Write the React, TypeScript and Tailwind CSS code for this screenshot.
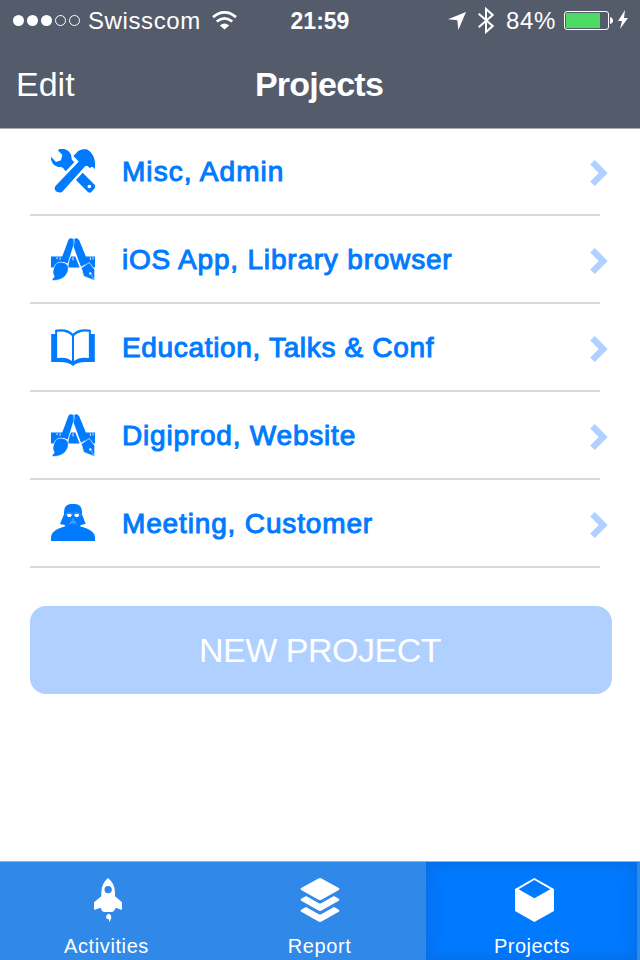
import React from 'react';

function ToolsIcon() {
  return (
    <svg viewBox="33 27 132 132" className="h-11 w-11" fill="#007aff">
      <path d="M58 27C77 24 91 34 94 48C95 54 94 58 97 61L103 67L77 94L70 85C67 81 63 81 58 81C41 79 32 66 33 50L48 66L63 61L67 45L54 31Z" />
      <path d="M100 48L109 39C116 29 127 26 140 28C153 34 164 50 165 68V87L157 80L149 84L143 78L136 78L69 153C57 165 36 151 47 137L116 65L110 58Z" />
      <path fillRule="evenodd" d="M108 120L128 98L164 134Q168 140 163 146L154 156Q149 161 143 155ZM148 134A5.5 5.5 0 1 0 148 145A5.5 5.5 0 1 0 148 134Z" />
    </svg>
  );
}

function DesignIcon() {
  return (
    <svg viewBox="33 30 132 128" className="h-[43px] w-11" fill="#007aff">
      <path d="M33 85H76L69 103L58 108L45 118H33Z" />
      <path d="M93 85H106L119 118H84L88 98Z" />
      <path d="M126 85H165V118H160L149 109L137 113Z" />
      <path d="M51 87V93M60 87V95M99 87V97M151 87V96M159 87V94" stroke="white" strokeWidth="2.5" />
      <path d="M86 33Q93 27 101 33L103 42L83 106L62 98Z" />
      <path d="M103 32Q112 27 118 37L145 103L123 116L101 56Z" />
      <path d="M102 34V48" stroke="white" strokeWidth="2" />
      <path d="M60 102Q77 101 84 112C90 137 68 159 38 157Q33 154 41 149C46 145 37 139 39 128Q43 104 60 102Z" stroke="white" strokeWidth="2" />
      <path d="M124 119L148 103L164 124V157L131 144Z" stroke="white" strokeWidth="2" />
      <circle cx="151" cy="136" r="3.5" fill="white" />
      <path d="M152 137L162 154" stroke="white" strokeWidth="1.5" />
    </svg>
  );
}

function BookIcon() {
  return (
    <svg viewBox="33 38 132 112" className="h-[37px] w-11" fill="#007aff">
      <path d="M33 53H45V40Q81 34 99 52Q117 34 153 40V53H165V138H139Q110 138 99 150Q87 138 59 138H33Z" />
      <path fill="white" d="M51 46Q80 42 96 59V135Q79 121 51 126ZM147 46Q118 42 102 59V135Q119 121 147 126Z" />
    </svg>
  );
}

function VaderIcon() {
  return (
    <svg viewBox="33 36 132 111" className="-mt-0.5 h-[37px] w-11" fill="#007aff">
      <path d="M33 147V134Q35 119 58 109L76 103L74 99L60 96L72 67C72 46 76 36 99 36C122 36 126 46 126 67L137 96L122 99L120 103L139 109Q163 119 165 134V147Z" />
      <path fill="white" d="M81 67Q91 63 96 70Q94 76 86 76L81 72ZM117 67Q107 63 102 70Q104 76 112 76L117 72Z" />
      <path d="M88 97L95 87H103L110 97M95 96L98 89M103 96L100 89M96 81H102" fill="none" stroke="#b5d6ff" strokeWidth="1.6" />
      <path d="M74 71L80 64Q91 59 99 66Q108 59 118 64L124 71" fill="none" stroke="#8fc3ff" strokeWidth="1.3" />
    </svg>
  );
}

function Chevron() {
  return (
    <svg viewBox="0 0 18 26" className="mt-[3px] h-[26px] w-[18px]">
      <path d="M2.5 2.2L13.2 13L2.5 23.8" fill="none" stroke="#b0d1ff" strokeWidth="6.4" />
    </svg>
  );
}

function Wifi() {
  return (
    <svg viewBox="637 32 74 56" className="h-[19px] w-[25px]" fill="none" stroke="white" strokeWidth="8">
      <path d="M640 50Q674 22 708 50M651 63Q674 44 697 63" />
      <path d="M660 75Q674 63 688 75L674 87Z" fill="white" stroke="none" />
    </svg>
  );
}

const projects = [
  { name: 'Misc, Admin', icon: <ToolsIcon />, tracking: 'tracking-[1.05px]' },
  { name: 'iOS App, Library browser', icon: <DesignIcon />, tracking: 'tracking-[0.8px]' },
  { name: 'Education, Talks & Conf', icon: <BookIcon />, tracking: 'tracking-[0.67px]' },
  { name: 'Digiprod, Website', icon: <DesignIcon />, tracking: 'tracking-[0.8px]' },
  { name: 'Meeting, Customer', icon: <VaderIcon />, tracking: 'tracking-[0.85px]' },
];

function StatusBar() {
  return (
    <div className="grid h-10 grid-cols-[290px_60px_290px] text-[24px] leading-9">
      <div className="flex h-10 items-center pl-[13px]">
        <svg viewBox="0 0 68 12" className="h-3 w-[68px]" fill="white">
          <circle cx="5.5" cy="6.5" r="5.5" />
          <circle cx="19.5" cy="6.5" r="5.5" />
          <circle cx="33.5" cy="6.5" r="5.5" />
          <circle cx="47.5" cy="6.5" r="5" fill="none" stroke="white" />
          <circle cx="61.5" cy="6.5" r="5" fill="none" stroke="white" />
        </svg>
        <span className="ml-[7px] w-[124px] whitespace-nowrap pt-0.5 tracking-[0.6px]">Swisscom</span>
        <Wifi />
      </div>
      <div className="whitespace-nowrap pt-[3px] text-center text-[23px] font-bold">21:59</div>
      <div className="flex h-10 items-center pl-[98px]">
        <svg viewBox="385 36 54 54" className="mt-0.5 h-[18px] w-[18px]" fill="white">
          <path d="M439 36L416 90L413 61L385 58Z" />
        </svg>
        <svg viewBox="474 21 48 81" className="ml-[12px] h-[27px] w-4" fill="none" stroke="white" strokeWidth="6">
          <path d="M476 41L518 78L498 96V27L518 45L476 82" />
        </svg>
        <span className="ml-[12px] w-[58px] whitespace-nowrap pt-0.5 tracking-[0.6px]">84%</span>
        <svg viewBox="0 0 65 20" className="h-5 w-[65px]">
          <rect x="0.5" y="1.5" width="44" height="18" rx="2.5" fill="none" stroke="white" />
          <rect x="2" y="3" width="34" height="15" fill="#4cd964" />
          <path d="M46 7Q49 8 49 10.5Q49 13 46 14Z" fill="white" />
          <path d="M61 0L54 11H58L56 19L64 8H60Z" fill="white" />
        </svg>
      </div>
    </div>
  );
}

function RocketIcon() {
  return (
    <svg viewBox="282 84 84 132" className="ml-[3px] h-11 w-7" fill="white">
      <path fillRule="evenodd" d="M324 84Q345 101 345 127V139L366 157V180L347 173Q343 185 335 186H313Q305 185 302 173L282 180V157L304 139V127Q304 101 324 84ZM324 108A11 11 0 1 0 325 130A11 11 0 1 0 324 108Z" />
      <path d="M326 191Q334 193 334 203Q333 210 327 216V208Q319 209 318 201Q318 193 326 191Z" />
    </svg>
  );
}

function LayersIcon() {
  return (
    <svg viewBox="0 0 40 44" className="h-11 w-10" fill="white">
      <path d="M18.5 0.5Q20 -0.5 21.5 0.5L38.8 10Q40 11 38.8 12L21.5 21.7Q20 22.5 18.5 21.7L1.2 12Q0 11 1.2 10Z" />
      <path d="M1.2 20.8L6 18L18.5 25Q20 26 21.5 25L34 18L38.8 20.8Q40 21.8 38.8 22.7L21.5 32.5Q20 33.4 18.5 32.5L1.2 22.7Q0 21.8 1.2 20.8Z" />
      <path d="M1.2 31.8L6 29L18.5 36Q20 37 21.5 36L34 29L38.8 31.8Q40 32.8 38.8 33.7L21.5 43.5Q20 44.4 18.5 43.5L1.2 33.7Q0 32.8 1.2 31.8Z" />
    </svg>
  );
}

function CubeIcon() {
  return (
    <svg viewBox="585 84 117 132" className="ml-1.5 h-11 w-[39px]" fill="white">
      <path fillRule="evenodd" d="M643 84L702 117V183L643 216L585 183V117ZM643 90L596 118L643 145L691 118Z" />
    </svg>
  );
}

export default function App() {
  return (
    <div className="flex h-[960px] w-[640px] flex-col overflow-hidden bg-white font-['Liberation_Sans',Arial,sans-serif] text-white">
      <header className="h-[129px] border-b border-[#aaa9ab] bg-[#545b6b]">
        <StatusBar />
        <div className="grid h-[88px] grid-cols-3 text-[34px] leading-[88px]">
          <span className="pl-4">Edit</span>
          <h1 className="-ml-0.5 text-center font-bold tracking-[-0.75px]">Projects</h1>
        </div>
      </header>
      <main className="-mt-px flex-1">
        <ul>
          {projects.map((p) => (
            <li key={p.name} className="mr-10 ml-[30px] flex h-[88px] items-center border-b-2 border-[#dadadb]">
              <span className="ml-[21px] w-[71px]">{p.icon}</span>
              <span className={`w-[468px] whitespace-nowrap pt-0.5 text-[28px] leading-[84px] text-[#007aff] [-webkit-text-stroke:1px_#007aff] ${p.tracking}`}>
                {p.name}
              </span>
              <span className="-mr-2 shrink-0"><Chevron /></span>
            </li>
          ))}
        </ul>
        <button className="mt-[38px] ml-[30px] block h-[88px] w-[582px] rounded-2xl bg-[#b0d1ff] pr-0.5 text-[34px] leading-[88px] tracking-[-0.5px]">
          NEW PROJECT
        </button>
      </main>
      <nav className="grid h-[99px] grid-cols-[213px_213px_211px_3px] border-t border-[#a7adb4] bg-[#3089e9] text-[20px]">
        <div className="flex flex-col items-center pt-4">
          <RocketIcon />
          <span className="mt-[9px] tracking-[0.6px]">Activities</span>
        </div>
        <div className="flex flex-col items-center pt-4">
          <LayersIcon />
          <span className="mt-[9px] tracking-[0.6px]">Report</span>
        </div>
        <div className="flex flex-col items-center bg-[#007aff] pt-4 shadow-[inset_0_0_20px_#086adf]">
          <CubeIcon />
          <span className="mt-[9px] ml-px tracking-[0.5px]">Projects</span>
        </div>
      </nav>
    </div>
  );
}
